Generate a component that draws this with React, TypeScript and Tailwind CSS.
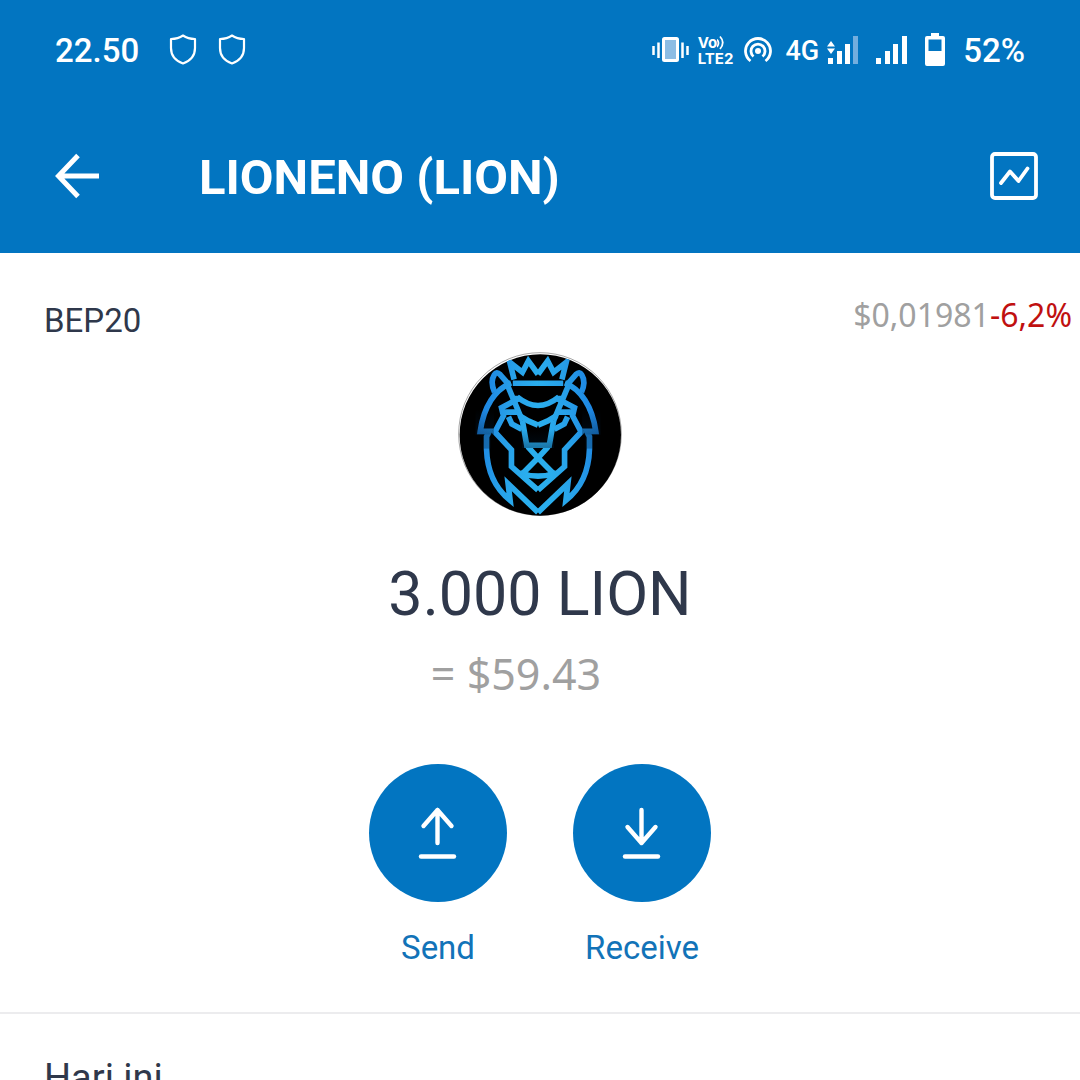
import React from "react";

function ShieldIcon() {
  return (
    <svg viewBox="0 0 28 32" className="h-8 w-7" fill="none" stroke="white" strokeWidth="2.200" strokeLinejoin="round" aria-hidden="true">
      <path d="M14 1.500 C10.500 4 6.500 5 2 5 V14 C2 22 7 27 14 29.500 C21 27 26 22 26 14 V5 C21.500 5 17.500 4 14 1.500 Z" />
    </svg>
  );
}

function VibrateIcon() {
  return (
    <svg viewBox="0 0 38 28" className="h-7 w-9.5" aria-hidden="true">
      <rect x="11.500" y="2.500" width="14" height="22" rx="1" fill="#8dbde4" stroke="white" strokeWidth="3" />
      <path d="M1.500 10 V19 M6.500 6.500 V22 M30.500 6.500 V22 M35.500 10 V19" stroke="white" strokeWidth="2.500" />
    </svg>
  );
}

function VolteIcon() {
  return (
    <div className="flex flex-col font-['Inter',sans-serif] text-[15px] leading-[15px] font-bold" aria-label="VoLTE 2">
      <span className="flex items-center">
        Vo
        <svg viewBox="0 0 8 16" className="h-4 w-2" fill="none" stroke="white" strokeWidth="1.800" aria-hidden="true">
          <path d="M0 4.500 Q3 8 0 12 M3 1.500 Q8.500 7.500 3 14" />
        </svg>
      </span>
      <span>LTE2</span>
    </div>
  );
}

function HotspotIcon() {
  return (
    <svg viewBox="0 0 30 28" className="h-7 w-7.5" fill="none" stroke="white" strokeWidth="2.800" aria-hidden="true">
      <circle cx="15" cy="15" r="3" fill="white" stroke="none" />
      <path d="M10.500 20.500 A7 7 0 1 1 19.500 20.500" />
      <path d="M7.500 25 A12.500 12.500 0 1 1 22.500 25" />
    </svg>
  );
}

function DataSignalIcon() {
  return (
    <svg viewBox="0 0 32 28" className="h-7 w-8" fill="white" aria-hidden="true">
      <path d="M4 5 L8 10.500 H0 Z M0 12.500 H8 L4 18 Z" />
      <rect x="1" y="22" width="5" height="6" />
      <rect x="10" y="15" width="5" height="13" />
      <rect x="18" y="8" width="5" height="20" />
      <rect x="26" y="0" width="5" height="28" fill="#73aede" />
    </svg>
  );
}

function SignalIcon() {
  return (
    <svg viewBox="0 0 32 28" className="h-7 w-8" fill="white" aria-hidden="true">
      <rect x="0" y="22" width="5" height="6" />
      <rect x="9" y="15" width="5" height="13" />
      <rect x="17" y="8" width="5" height="20" />
      <rect x="26" y="0" width="5" height="28" />
    </svg>
  );
}

function BatteryIcon() {
  return (
    <svg viewBox="0 0 22 34" className="h-8.5 w-5.5" aria-hidden="true">
      <path fill="white" fillRule="evenodd" d="M7 0 H15 V3 H19 Q21 3 21 5 V31 Q21 33 19 33 H3 Q1 33 1 31 V5 Q1 3 3 3 H7 Z M4.500 6.500 V18 H17.500 V6.500 Z" />
    </svg>
  );
}

function BackIcon() {
  return (
    <svg viewBox="0 0 46 48" className="h-12 w-11.5" fill="none" stroke="white" strokeWidth="5" aria-hidden="true">
      <path d="M24 3.500 L4.500 24 L24 44.500 M4.500 24 H45" />
    </svg>
  );
}

function ChartIcon() {
  return (
    <svg viewBox="0 0 48 48" className="size-12" fill="none" stroke="white" strokeWidth="3.800" strokeLinecap="round" strokeLinejoin="round" aria-hidden="true">
      <rect x="2" y="2" width="44" height="44" rx="3" />
      <path d="M11 31 L20 19.500 L28.500 29 L37.500 16.500" />
    </svg>
  );
}

function TransferIcon({ down = false }: { down?: boolean }) {
  return (
    <svg viewBox="0 0 40 54" className="h-13.5 w-10" fill="none" stroke="white" strokeWidth="4.400" strokeLinecap="round" strokeLinejoin="round" aria-hidden="true">
      {down ? <path d="M19.500 4 V37 M5.500 21 L19.500 37 L33.500 21" /> : <path d="M19.500 37 V4 M5.500 20 L19.500 4 L33.500 20" />}
      <path d="M3 50.500 H36" />
    </svg>
  );
}

function LionHalf() {
  return (
    <>
      <path d="M293 104 L264 64 L246 98 L208 68 L221 120" />
      <path d="M293 131 H217" />
      <path d="M206 136 L179 105 Q168 94 161 106 C151 122 155 142 162 158" />
      <path d="M199 132 L246 244" />
      <path d="M212 130 C164 149 129 202 119 276 H146 L138 292 V330 C140 400 164 448 209 484 L203 434 L293 520" />
      <path d="M230 169 V180 L183 205 L189 229 L163 278 L213 332 V382 L293 453" />
      <path d="M230 172 Q262 198 293 198" />
      <path d="M188 218 H233" />
      <path d="M236 228 Q250 236 262 244 L293 257" />
      <path d="M204 232 L214 254 L244 270" />
      <path d="M246 244 L259 318 H293" />
      <path d="M262 322 L293 356 L246 404" />
      <path d="M238 401 Q265 411 293 411" />
    </>
  );
}

function LionLogo() {
  return (
    <svg viewBox="52 37 494 494" className="size-41" role="img" aria-label="LION token">
      <defs>
        <linearGradient id="mane" gradientUnits="userSpaceOnUse" x1="110" y1="300" x2="270" y2="320">
          <stop offset="0" stopColor="#1d84e2" />
          <stop offset="0.500" stopColor="#279fe8" />
          <stop offset="1" stopColor="#2aaeee" />
        </linearGradient>
        <linearGradient id="shade" x1="0" y1="0" x2="0" y2="1">
          <stop offset="0" stopColor="#001a33" stopOpacity="0" />
          <stop offset="1" stopColor="#001a33" stopOpacity="0.400" />
        </linearGradient>
        <clipPath id="disc">
          <circle cx="299" cy="286" r="243" />
        </clipPath>
      </defs>
      <circle cx="299" cy="284" r="245" fill="white" stroke="#777" strokeWidth="2" />
      <circle cx="300" cy="287" r="243" fill="black" />
      <g clipPath="url(#disc)" fill="none" stroke="url(#mane)" strokeWidth="17" strokeLinejoin="miter">
        <LionHalf />
        <g transform="translate(586 0) scale(-1 1)">
          <LionHalf />
        </g>
      </g>
      <rect x="105" y="210" width="55" height="76" fill="url(#shade)" />
      <rect x="426" y="210" width="55" height="76" fill="url(#shade)" />
      <rect x="128" y="286" width="22" height="42" fill="#001a33" fillOpacity="0.300" />
      <rect x="436" y="286" width="22" height="42" fill="#001a33" fillOpacity="0.300" />
      <rect x="245" y="270" width="96" height="56" fill="url(#shade)" />
    </svg>
  );
}

function Action({ label, down }: { label: string; down?: boolean }) {
  return (
    <button type="button" className="flex w-[138px] flex-col items-center gap-6 text-[33px] leading-11 text-[#1273b8]">
      <span className="flex size-[138px] items-center justify-center rounded-full bg-[#0275c1]">
        <TransferIcon down={down} />
      </span>
      {label}
    </button>
  );
}

export default function App() {
  return (
    <div className="flex h-screen flex-col overflow-hidden bg-white font-['Roboto',sans-serif] text-[#2f384b]">
      <header className="shrink-0 bg-[#0275c1] text-white">
        <div className="flex h-25 items-center justify-between px-[55px] text-[33px] leading-[48px] font-medium">
          <div className="flex items-center">
            <span className="pt-0.5">22.50</span>
            <span className="ml-[30px] flex gap-[21px]">
              <ShieldIcon />
              <ShieldIcon />
            </span>
          </div>
          <div className="flex items-center">
            <VibrateIcon />
            <span className="ml-2">
              <VolteIcon />
            </span>
            <span className="ml-2.5">
              <HotspotIcon />
            </span>
            <span className="mr-2 ml-3 pt-0.5 text-[27px]">4G</span>
            <DataSignalIcon />
            <span className="ml-[17px]">
              <SignalIcon />
            </span>
            <span className="mr-[17px] ml-4">
              <BatteryIcon />
            </span>
            <span className="pt-0.5">52%</span>
          </div>
        </div>
        <div className="flex h-[153px] items-start pt-[52px] pr-[42px] pl-[54px]">
          <button type="button" aria-label="Back">
            <BackIcon />
          </button>
          <h1 className="ml-[99px] flex-1 text-[49px] leading-[52px] font-bold">LIONENO (LION)</h1>
          <button type="button" aria-label="Price chart">
            <ChartIcon />
          </button>
        </div>
      </header>

      <main className="flex flex-1 flex-col">
        <section className="flex flex-col items-center border-b-2 border-[#ececee] pb-[42px]">
          <div className="flex w-full items-start justify-between pt-10 pr-2 pl-11">
            <span className="pt-1.5 text-[33px] leading-11">BEP20</span>
            <span className="flex font-['Noto_Sans',sans-serif] text-[32px] leading-11 text-[#a0a0a0]">
              <span>$0,01981</span>
              <span className="text-[#c01010]">-6,2%</span>
            </span>
          </div>
          <div className="mt-[9px]">
            <LionLogo />
          </div>
          <p className="mt-10 text-[61px] leading-[76px]">3.000 LION</p>
          <p className="mt-2 mr-12 font-['Noto_Sans',sans-serif] text-[43px] leading-[68px] text-[#a0a0a0]">= $59.43</p>
          <div className="mt-14 flex gap-[66px]">
            <Action label="Send" />
            <Action label="Receive" down />
          </div>
        </section>
        <h2 className="px-11 pt-10 text-[38px] leading-12">Hari ini</h2>
      </main>
    </div>
  );
}
